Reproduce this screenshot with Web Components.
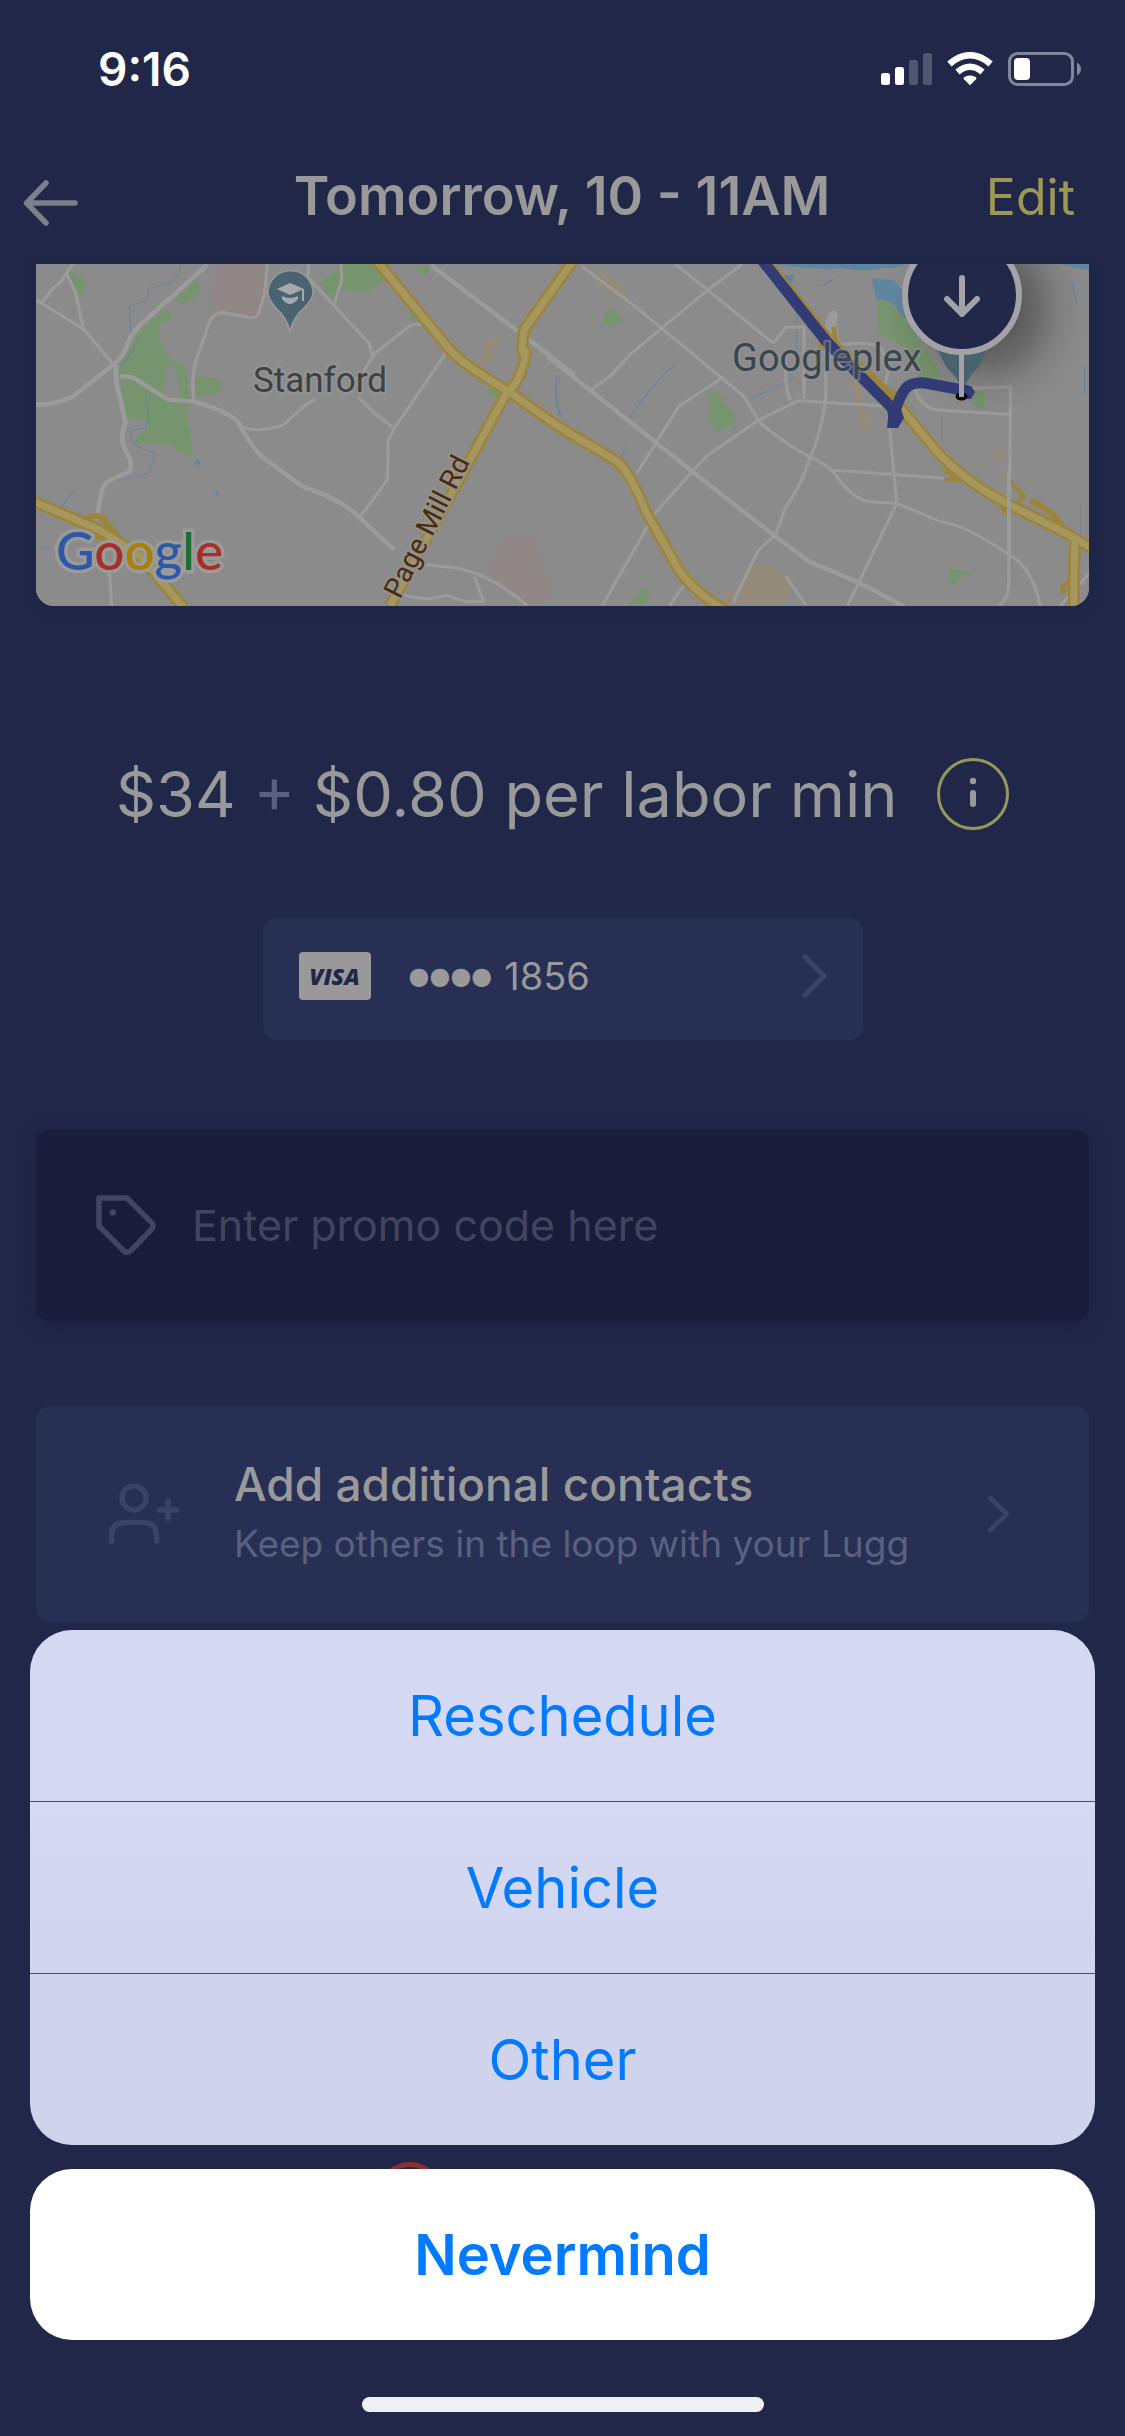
<!DOCTYPE html>
<html lang="en">
<head>
<meta charset="utf-8">
<meta name="viewport" content="width=device-width, initial-scale=1">
<title>Tomorrow, 10 - 11AM</title>
<style>
  :root {
    --bg: #212748;
    --card: #272f54;
    --field: #191c3a;
    --text: #9a999a;
    --text-soft: #5a607f;
    --line: #3b4268;
    --accent: #9b9855;
    --tint: #007aff;
  }
  body { margin: 0; background: var(--bg); color: var(--text); font-family: Inter, "Liberation Sans", sans-serif; }
</style>
</head>
<body>
<order-screen>
  <status-bar></status-bar>
  <screen-header>Tomorrow, 10 - 11AM</screen-header>
  <route-map></route-map>
  <price-line></price-line>
  <payment-card>1856</payment-card>
  <promo-field></promo-field>
  <contact-card>
    Add additional contacts
    <span slot="detail">Keep others in the loop with your Lugg</span>
  </contact-card>
  <cancel-mark></cancel-mark>
  <action-sheet slot="overlay">
    <sheet-option>Reschedule</sheet-option>
    <sheet-option>Vehicle</sheet-option>
    <sheet-option>Other</sheet-option>
    <sheet-option slot="cancel" primary>Nevermind</sheet-option>
  </action-sheet>
</order-screen>

<script>
const define = (name, markup) => {
  const template = document.createElement('template');
  template.innerHTML = markup;
  customElements.define(name, class extends HTMLElement {
    constructor() {
      super();
      this.attachShadow({ mode: 'open' }).append(template.content.cloneNode(true));
    }
  });
};

const base = `
  * { box-sizing: border-box; }
  svg { display: block; flex: none; }
  button { font: inherit; color: inherit; background: none; border: 0; padding: 0; margin: 0; text-align: left; cursor: pointer; }
`;

define('order-screen', `
  <style>
    ${base}
    :host { display: block; min-height: 100vh; }
    main { display: flex; flex-direction: column; padding-bottom: 24px; }
  </style>
  <main><slot></slot></main>
  <slot name="overlay"></slot>
`);

define('status-bar', `
  <style>
    ${base}
    :host { display: flex; align-items: center; justify-content: space-between; height: 138px; padding: 0 44px 0 98px; color: #fff; }
    time { font-size: 46px; font-weight: 600; line-height: 56px; }
  </style>
  <time>9:16</time>
  <svg width="200" height="34" viewBox="881 52 200 34" role="img" aria-label="Signal, Wi-Fi, battery">
    <g fill="#fff">
      <rect x="881" y="73" width="9" height="12" rx="2.5"/>
      <rect x="895" y="67" width="9" height="18" rx="2.5"/>
      <rect x="909" y="60" width="9" height="25" rx="2.5" opacity=".22"/>
      <rect x="923" y="53" width="9" height="32" rx="2.5" opacity=".22"/>
      <path d="M970 85.300 L963.500 78.800 Q963.500 77.500 965 76.800 Q970 74 975 76.800 Q976.500 77.500 976.500 78.800 Z"/>
    </g>
    <g fill="none" stroke="#fff">
      <path d="M949.400 64 Q970 46.500 990.600 64" stroke-width="6.500"/>
      <path d="M957.500 72 Q970 61.500 982.500 72" stroke-width="6.500"/>
    </g>
    <rect x="1009.500" y="53.500" width="63" height="31" rx="8" fill="none" stroke="#828699" stroke-width="3"/>
    <rect x="1014" y="58" width="16" height="22" rx="4" fill="#fff"/>
    <path d="M1077 62.500 Q1081 65 1081 69 Q1081 73 1077 75.500 Z" fill="#828699"/>
  </svg>
`);

define('screen-header', `
  <style>
    ${base}
    :host { display: block; padding: 22px 50px 31px 23px; }
    header { display: grid; grid-template-columns: 1fr auto 1fr; align-items: baseline; line-height: 72px; }
    h1 { margin: 0; padding-left: 26px; font-size: 54px; font-weight: 600; line-height: 72px; white-space: nowrap; }
    .back { align-self: center; justify-self: start; padding-top: 12px; color: #7d7f8b; }
    .edit { justify-self: end; font-size: 50px; line-height: 72px; color: var(--accent); }
  </style>
  <header>
    <button class="back" aria-label="Back">
      <svg width="55" height="46" viewBox="0 0 55 46" fill="none" stroke="currentColor" stroke-width="5.500" stroke-linecap="round" stroke-linejoin="round"><path d="M52 23H4M23 3L3.500 23L23 43"/></svg>
    </button>
    <h1><slot></slot></h1>
    <button class="edit">Edit</button>
  </header>
`);

define('route-map', `
  <style>
    ${base}
    :host { display: block; margin: 0 36px; border-radius: 0 0 18px 18px; overflow: hidden; background: #8b8b8b; box-shadow: 0 4px 16px rgba(20, 24, 50, .15); }
    svg { width: 100%; height: auto; }
    .green { fill: #76946d; }
    .pink { fill: #908786; }
    .sand { fill: #958b7b; }
    .water { fill: #5f86a1; }
    .stream { fill: none; stroke: #6585a0; stroke-width: 3; }
    .road { fill: none; stroke: #9b9b9b; stroke-width: 9; stroke-linejoin: round; }
    .wide { stroke-width: 13; }
    .edge { fill: none; stroke: #9c8439; stroke-linejoin: round; }
    .fill { fill: none; stroke: #a6975e; stroke-linejoin: round; }
    text { font-family: Roboto, "Liberation Sans", sans-serif; paint-order: stroke; stroke-linejoin: round; }
    .logo { font-family: Lato, sans-serif; font-size: 53px; font-weight: 500; stroke: #9a9a98; stroke-width: 7px; }
  </style>
  <svg viewBox="36 264 1053 342" role="img" aria-label="Route map">
    <defs>
      <radialGradient id="shade"><stop offset="0" stop-color="#222" stop-opacity=".7"/><stop offset=".5" stop-color="#333" stop-opacity=".38"/><stop offset=".75" stop-color="#444" stop-opacity=".14"/><stop offset="1" stop-color="#555" stop-opacity="0"/></radialGradient>
      <g id="major">
        <path d="M372 255 L450 350 Q465 366 508 391 L556 425 L618 462 Q633 478 645 510 L676 565 Q690 590 725 610"/>
        <path d="M575 258 L524 330 Q520 360 526 352 Q522 380 506 394 L390 606"/>
        <path d="M30 500 L100 530 L140 556 L184 608"/>
      </g>
    </defs>
    <rect x="36" y="264" width="1053" height="342" fill="#8b8b8b"/>
    <g transform="translate(0 250) scale(.3636 .3333)">
      <path class="pink" d="M600 42H735L715 190Q700 205 585 185Q575 120 600 42ZM1385 870Q1430 840 1470 870L1520 1020L1490 1067L1440 1060L1340 970Z"/>
      <path class="green" d="M185 60L238 90L228 132L205 115ZM545 85L550 135L500 165L482 150ZM440 185Q480 170 470 215L440 220Q430 270 470 330Q510 335 515 375L525 450Q505 490 525 540L530 620L480 600L470 580L370 580Q365 560 410 535L400 510L345 505L330 385L325 350L380 250ZM540 380Q610 375 612 410Q610 440 540 440ZM880 100Q920 60 940 42H1075Q1060 110 1000 125Q950 125 940 115L925 165ZM1130 175L1175 215L1125 210ZM1140 50L1190 45L1170 78ZM1345 412L1380 425V450L1345 438Z"/>
      <path d="M455 365Q465 330 480 355L500 440H450Z" fill="#8b8b8b"/>
      <path class="sand" d="M1330 275L1380 258L1355 300L1362 325L1320 350L1310 335L1330 310ZM1485 440L1500 455L1480 470Z"/>
      <path class="stream" d="M497 42Q490 95 460 100L410 115L405 150L355 168L360 240M385 260Q370 310 330 350M400 430Q415 500 400 535L365 540Q350 565 380 590L428 612L410 668Q370 690 310 688M205 720L170 770M100 890L140 897M1540 380Q1520 440 1545 500"/>
      <path d="M543 627l10 10-10 12-10-12zM597 724l6 7-6 7-6-7z" fill="#6684a0"/>
      <path class="road wide" d="M570 45L385 225Q355 260 345 300Q330 330 310 345L200 440Q150 465 95 465M320 345Q315 400 330 440L345 520Q330 560 340 590L358 630Q365 660 350 668L300 692Q280 705 277 740L265 810M330 378L365 382L460 448L530 455Q620 480 655 515Q690 590 720 620L830 708L900 738Q960 770 985 800L1085 900"/>
      <path class="road" d="M200 42L165 100Q140 115 130 140L112 158M100 150L230 238L310 340M180 70Q210 120 215 165L230 238M735 42L728 130L710 195Q700 208 675 200L610 187Q585 190 575 220L550 300Q530 350 530 400L533 455M850 42L845 80L1015 280L1025 320L1000 365M938 42L940 90L920 160M1025 315L1130 225L1180 220M1238 290L1085 535L1068 570L1065 690L1025 750L990 800M870 445Q840 460 780 525Q700 550 670 530M985 440L1035 495L1085 535M1140 940L1260 955Q1360 980 1450 1067M1085 1020Q1130 1050 1190 1045L1230 1037L1280 1055L1330 1055L1305 980M300 950L307 1067"/>
      <path class="road wide" d="M1185 45L1420 240L1580 375"/>
    </g>
    <g transform="translate(555 250) scale(.3636 .3333)">
      <path class="water" d="M600 42H965Q930 60 900 52Q870 70 790 55Q720 60 600 42ZM630 75l30 0-10 25-15-5zM870 85L930 90L965 130V230L940 190L910 150L885 150ZM1390 42H1470V62Z"/>
      <path class="stream" d="M760 90L730 110M770 85L740 105M665 190V300M1420 90L1435 160M540 447L660 380M180 625L195 590M200 510Q270 400 330 345M1063 500V570M1457 350V430M1447 760V900M5 375Q-5 440 15 500M440 460Q480 490 500 550"/>
      <path class="green" d="M890 150L925 155L965 210L1045 340L1065 385L1000 385L970 300L920 265L885 250ZM155 170L182 205L155 238L130 210ZM415 415L455 435L465 460L500 492L490 525L445 545L420 500L432 470ZM1150 425H1183V480L1150 465ZM1082 955L1150 970L1110 985L1100 1010L1085 990ZM240 1010L260 1025L250 1063H200L225 1045Z"/>
      <path class="sand" d="M120 60L190 105L195 145L160 140L115 100ZM810 395L840 400L845 470L865 500V542L847 540L830 470ZM1205 605L1240 600V635L1205 630ZM545 930L600 955L665 990L635 1050L610 1063H455L470 1020L500 1030Z"/>
      <path class="road wide" d="M-20 320L280 580L600 855L700 935L840 1000L960 1070"/>
      <path class="road" d="M75 50L210 160L460 385L520 440L565 520Q650 595 700 620Q760 650 775 680Q820 745 860 755L940 760L1060 815Q1130 825 1250 915Q1310 950 1335 1067M330 42L420 120L600 280M515 42L420 120L210 310L150 380L100 420M465 380L340 470L225 670M130 1067L275 790L415 620L560 510L670 452L905 468M600 280L635 232H685V445M635 310Q630 430 650 450M745 300V440Q735 540 700 630Q670 720 635 770L608 850M760 660L1070 685M920 530L940 760L805 1067M375 975L315 1067M610 850L560 900Q530 960 490 1060M635 980L690 1065M985 400Q1000 470 1050 480L1248 493M1150 415L1253 410L1248 1000Q1248 1050 1220 1067M1470 970L1390 1067M780 285Q880 270 900 300L915 370L905 420M765 195L780 285"/>
      <path d="M765 195L750 250" stroke="#9b9b9b" stroke-width="26" stroke-linecap="round"/>
      <path class="edge" stroke-width="12" d="M1072 665L1130 690L1072 690M1240 680L1290 740L1240 790L1215 740M910 435L945 425L930 470M725 260L735 300M765 230L775 280M1420 1000Q1385 1000 1400 1030"/>
    </g>
    <g class="edge" stroke-width="12">
      <use href="#major"/>
      <path d="M764 260L828 340L894 400L940 455Q970 485 1010 505L1060 530L1095 550M1075 540Q1074 560 1074 610"/>
      <path d="M84 520Q100 510 108 525L125 545M96 536L122 548M1030 500Q1058 512 1066 535" stroke-width="6"/>
    </g>
    <g class="fill" stroke-width="7">
      <use href="#major"/>
      <path d="M894 400L940 455Q970 485 1010 505L1060 530L1095 550M1075 540Q1074 560 1074 610"/>
    </g>
    <path d="M1009 470V560" stroke="#9b9b9b" stroke-width="4"/>
    <ellipse cx="988" cy="308" rx="100" ry="108" fill="url(#shade)"/>
    <path d="M938 350Q945 368 955 376Q961 384 962 394Q966 380 974 372Q983 364 986 350Z" fill="#48636b"/>
    <path d="M762 260L826 341L892 408Q894 414 894 424L895 412Q900 395 906 388Q912 382 925 383L968 391" fill="none" stroke="#333b76" stroke-width="11"/>
    <path d="M889 410L900 406L904 418L898 428H887ZM964 386L971 386L975 392L971 399H964Z" fill="#333b76"/>
    <text x="732" y="371" font-size="38" fill="#39474c" stroke="#92929a" stroke-width="4" stroke-opacity=".6">Googleplex</text>
    <ellipse cx="961.500" cy="396.500" rx="6" ry="4" fill="#050505"/>
    <path d="M961.500 350V397" stroke="#a3a2a6" stroke-width="5"/>
    <circle cx="962" cy="295" r="57" fill="#22284a" stroke="#a3a2a6" stroke-width="6"/>
    <path d="M962 278V314M947 299L962 314L977 299" fill="none" stroke="#a3a2a6" stroke-width="6" stroke-linecap="round" stroke-linejoin="round"/>
    <path d="M290 332Q287 317 276 308Q268 299 268 293A22.500 22.500 0 0 1 313 293Q313 299 304 308Q293 317 290 332Z" fill="#496370" stroke="#9a9a9a" stroke-width="1.500"/>
    <path d="M277 289L290 283L304 289L290 295ZM302 289H304V301H302ZM282 296Q290 300 298 296V299Q294 304 290 304Q286 304 282 299Z" fill="#a5a9ab"/>
    <text x="253" y="392" font-size="35" fill="#404040" stroke="#939393" stroke-width="4">Stanford</text>
    <text transform="translate(400 600) rotate(-63)" font-size="28" fill="#492c10" stroke="#95918a" stroke-width="4">Page Mill Rd</text>
    <text class="logo" x="56" y="570"><tspan fill="#2e57a8">G</tspan><tspan fill="#a62f28">o</tspan><tspan fill="#a98003">o</tspan><tspan fill="#2e57a8">g</tspan><tspan fill="#1f7036">l</tspan><tspan fill="#a62f28">e</tspan></text>
  </svg>
`);

define('price-line', `
  <style>
    ${base}
    :host { display: flex; align-items: center; justify-content: center; gap: 40px; margin-top: 152px; padding: 0 36px; }
    p { margin: 0; font-size: 63px; line-height: 72px; }
    .plus { color: var(--text-soft); }
  </style>
  <p>$34 <span class="plus">+</span> $0.80 per labor min</p>
  <button aria-label="Pricing details">
    <svg width="72" height="72" viewBox="0 0 72 72"><circle cx="36" cy="36" r="34.500" fill="none" stroke="#98975a" stroke-width="3"/><circle cx="36" cy="23" r="3.200" fill="#9a999a"/><path d="M36 35V46" stroke="#9a999a" stroke-width="6" stroke-linecap="round"/></svg>
  </button>
`);

define('payment-card', `
  <style>
    ${base}
    :host { display: flex; justify-content: center; margin: 88px 36px 0; }
    button { display: flex; align-items: center; width: 600px; height: 122px; padding: 0 36px 6px; border-radius: 14px; background: var(--card); font-size: 38px; line-height: 48px; }
    .brand { display: flex; align-items: center; justify-content: center; width: 72px; height: 48px; margin-right: 38px; border-radius: 4px; background: var(--text); color: var(--bg); font: italic 800 23px/48px "Open Sans", sans-serif; }
    .dots { margin-right: 12px; font: 24px/48px "DejaVu Sans", sans-serif; }
    .number { flex: 1; }
  </style>
  <button>
    <span class="brand">VISA</span>
    <span class="dots">●●●●</span>
    <span class="number"><slot></slot></span>
    <svg width="25" height="44" viewBox="0 0 25 44" fill="none" stroke="#3b4268" stroke-width="5" stroke-linecap="round" stroke-linejoin="round"><path d="M3 3L22 22L3 41"/></svg>
  </button>
`);

define('promo-field', `
  <style>
    ${base}
    :host { display: block; margin: 90px 36px 0; }
    label { display: flex; align-items: center; gap: 36px; height: 191px; padding: 0 60px 2px; border-radius: 14px; background: var(--field); box-shadow: 0 4px 20px rgba(25, 28, 58, .4); }
    input { flex: 1; min-width: 0; height: 72px; margin: 0; padding: 0; border: 0; outline: 0; background: none; color: var(--text); font: 43px/72px Inter, "Liberation Sans", sans-serif; }
    input::placeholder { color: #42455f; opacity: 1; }
  </style>
  <label>
    <svg width="60" height="60" viewBox="0 0 60 60" aria-hidden="true"><path d="M3 3H31L55.500 27.500Q58.500 31 55.500 34.500L35 55.500Q31 59 27.500 55.500L3 31Z" fill="none" stroke="#42455f" stroke-width="5.500" stroke-linejoin="round"/><circle cx="17" cy="17.500" r="3.200" fill="#42455f"/></svg>
    <input type="text" aria-label="Promo code" placeholder="Enter promo code here">
  </label>
`);

define('contact-card', `
  <style>
    ${base}
    :host { display: block; margin: 85px 36px 0; }
    button { display: flex; align-items: center; gap: 54px; width: 100%; height: 216px; padding: 0 78px 0 72px; border-radius: 14px; background: var(--card); }
    .words { flex: 1; display: flex; flex-direction: column; gap: 4px; line-height: 56px; }
    .name { font-size: 46px; font-weight: 500; }
    .detail { font-size: 37px; color: var(--text-soft); }
  </style>
  <button>
    <svg width="72" height="62" viewBox="0 0 72 62" fill="none" stroke="#3b4268" stroke-width="5.500" stroke-linecap="round"><circle cx="26" cy="15" r="12"/><path d="M3.500 58V53Q3.500 39.500 17 39.500H35Q48.500 39.500 48.500 53V58M60 18V36M51 27H69"/></svg>
    <span class="words">
      <span class="name"><slot></slot></span>
      <span class="detail"><slot name="detail"></slot></span>
    </span>
    <svg width="24" height="38" viewBox="0 0 24 38" fill="none" stroke="#3b4268" stroke-width="4.500" stroke-linecap="round" stroke-linejoin="round"><path d="M3 3L20 19L3 35"/></svg>
  </button>
`);

define('cancel-mark', `
  <style>
    ${base}
    :host { display: block; margin-top: 540px; padding-left: 377px; }
  </style>
  <svg width="66" height="66" viewBox="0 0 66 66" aria-hidden="true"><circle cx="33" cy="33" r="30.500" fill="none" stroke="#8e2f2c" stroke-width="5"/></svg>
`);

define('action-sheet', `
  <style>
    ${base}
    :host { position: fixed; left: 0; right: 0; bottom: 0; display: flex; flex-direction: column; gap: 24px; padding: 0 30px 24px; }
    .options { display: flex; flex-direction: column; gap: 1px; border-radius: 42px; overflow: hidden; background: #3f49a8; }
    .bar { width: 402px; height: 15px; margin: 33px auto 0; border-radius: 8px; background: #f0eff1; }
  </style>
  <div class="options" role="group"><slot></slot></div>
  <slot name="cancel"></slot>
  <div class="bar"></div>
`);

define('sheet-option', `
  <style>
    ${base}
    :host { display: block; background: #d4d8f2; }
    :host(:nth-of-type(2)) { background: linear-gradient(#d5d9f3, #d0d4ee); }
    :host(:nth-of-type(3)) { background: #cfd4ec; }
    :host([primary]) { background: #fff; border-radius: 42px; }
    :host([primary]) button { font-weight: 600; }
    button { display: block; width: 100%; height: 171px; text-align: center; font-size: 56px; line-height: 72px; color: var(--tint); }
  </style>
  <button><slot></slot></button>
`);
</script>
</body>
</html>
